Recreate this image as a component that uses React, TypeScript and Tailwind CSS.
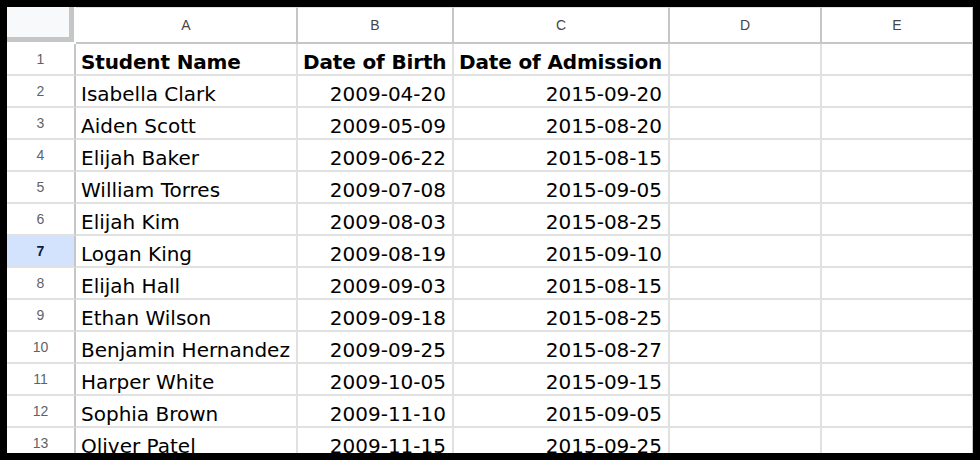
import React from "react";

type Row = {
  name: string;
  dob: string;
  doa: string;
};

const rows: Row[] = [
  { name: "Isabella Clark", dob: "2009-04-20", doa: "2015-09-20" },
  { name: "Aiden Scott", dob: "2009-05-09", doa: "2015-08-20" },
  { name: "Elijah Baker", dob: "2009-06-22", doa: "2015-08-15" },
  { name: "William Torres", dob: "2009-07-08", doa: "2015-09-05" },
  { name: "Elijah Kim", dob: "2009-08-03", doa: "2015-08-25" },
  { name: "Logan King", dob: "2009-08-19", doa: "2015-09-10" },
  { name: "Elijah Hall", dob: "2009-09-03", doa: "2015-08-15" },
  { name: "Ethan Wilson", dob: "2009-09-18", doa: "2015-08-25" },
  { name: "Benjamin Hernandez", dob: "2009-09-25", doa: "2015-08-27" },
  { name: "Harper White", dob: "2009-10-05", doa: "2015-09-15" },
  { name: "Sophia Brown", dob: "2009-11-10", doa: "2015-09-05" },
  { name: "Oliver Patel", dob: "2009-11-15", doa: "2015-09-25" },
];

const SELECTED_ROW = 7;

// column widths include the 2px right grid line
const colHeaders = [
  { label: "A", w: "w-[222px]" },
  { label: "B", w: "w-[156px]" },
  { label: "C", w: "w-[216px]" },
  { label: "D", w: "w-[152px]" },
  { label: "E", w: "w-[151px]" },
];

const cellFont = "font-['DejaVu_Sans',Verdana,sans-serif] text-[20px] leading-[24px] text-black";

function RowHeader({ n }: { n: number }) {
  const selected = n === SELECTED_ROW;
  return (
    <div
      className={`w-[69px] shrink-0 h-[32px] flex items-center justify-center border-r-2 border-b-2 border-r-[#c4c7c5] border-b-[#e1e1e1] font-['Liberation_Sans',Arial,sans-serif] text-[14px] ${
        selected ? "bg-[#d3e3fd] font-bold text-[#041e49]" : "bg-white text-[#5f6368]"
      }`}
    >
      {n}
    </div>
  );
}

function Cell({
  w,
  children,
  right,
  bold,
  last,
}: {
  w: string;
  children?: React.ReactNode;
  right?: boolean;
  bold?: boolean;
  last?: boolean;
}) {
  return (
    <div
      className={`${w} shrink-0 h-[32px] flex items-end whitespace-nowrap overflow-hidden border-b-2 border-b-[#e1e1e1] ${
        last ? "border-r border-r-[#c4c7c5]" : "border-r-2 border-r-[#e1e1e1]"
      } ${right ? "justify-end pr-[6px]" : "pl-[5px]"} ${bold ? "font-bold tracking-[-0.15px]" : ""} ${cellFont}`}
    >
      {children}
    </div>
  );
}

export default function App() {
  return (
    <div className="w-[980px] h-[460px] bg-black p-[7px]">
      <div className="w-full h-full bg-white overflow-hidden">
        {/* column header row */}
        <div className="flex h-[37px]">
          <div className="w-[69px] shrink-0 h-[37px] bg-white">
            <div className="w-[67px] h-[35px] bg-[#f8f9fa] border-r-[5px] border-b-[5px] border-[#c4c7c5]" />
          </div>
          {colHeaders.map((c, i) => (
            <div
              key={c.label}
              className={`${c.w} shrink-0 h-[37px] flex items-center justify-center border-t border-t-[#e1e1e1] border-b-2 border-b-[#c4c7c5] ${
                i === colHeaders.length - 1 ? "border-r border-r-[#c4c7c5]" : "border-r-2 border-r-[#c4c7c5]"
              } font-['Liberation_Sans',Arial,sans-serif] text-[14px] text-[#444746]`}
            >
              {c.label}
            </div>
          ))}
        </div>

        {/* row 1: headings */}
        <div className="flex">
          <RowHeader n={1} />
          <Cell w="w-[222px]" bold>
            Student Name
          </Cell>
          <Cell w="w-[156px]" bold>
            Date of Birth
          </Cell>
          <Cell w="w-[216px]" bold>
            Date of Admission
          </Cell>
          <Cell w="w-[152px]" />
          <Cell w="w-[151px]" last />
        </div>

        {rows.map((r, i) => (
          <div key={r.name + i} className="flex">
            <RowHeader n={i + 2} />
            <Cell w="w-[222px]">{r.name}</Cell>
            <Cell w="w-[156px]" right>
              {r.dob}
            </Cell>
            <Cell w="w-[216px]" right>
              {r.doa}
            </Cell>
            <Cell w="w-[152px]" />
            <Cell w="w-[151px]" last />
          </div>
        ))}
      </div>
    </div>
  );
}
